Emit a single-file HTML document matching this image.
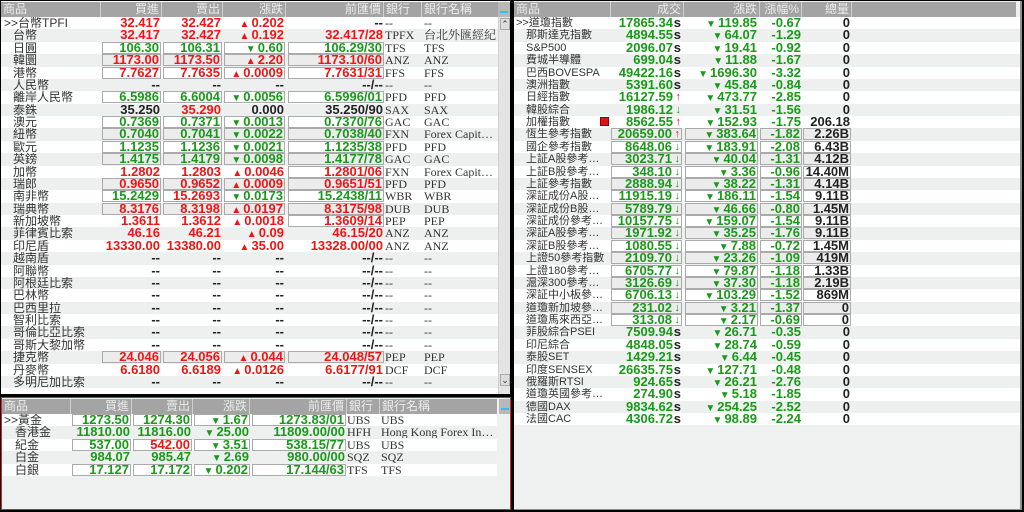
<!DOCTYPE html>
<html><head><meta charset="utf-8">
<style>
*{margin:0;padding:0;box-sizing:border-box}
body{width:1024px;height:512px;background:#000;position:relative;overflow:hidden;font-family:"Liberation Sans","Noto Sans CJK TC",sans-serif}
.p{position:absolute;overflow:hidden}
#tl{left:1px;top:1px;width:509px;height:393px;background:#fff}
#bl{left:1px;top:397px;width:510px;height:113px;background:#eff1f1;border:1px solid #e02020}
#rt{left:514px;top:1px;width:508px;height:509px;background:#eff1f1;border-right:2px solid #909090;border-bottom:1px solid #909090}
.h{position:absolute;top:1px;left:0;height:15px;background:#a4a4a4;color:#ececec;font-size:12px;line-height:15px}
.h span{position:absolute;top:0;height:15px;border-right:1px solid #d0d0d0;padding:0 2px}
.h .rr{text-align:right}
.rows{position:absolute;top:16px;left:0}
.r{position:relative;height:12.375px;font-size:13px;line-height:12px}
.r:nth-child(even){background:#eef0f0}
.r>*{position:absolute;top:0;height:12px;white-space:nowrap;font-style:normal;text-decoration:none}
.r>i{font-size:11px;color:#333;font-weight:normal;overflow:hidden;text-overflow:ellipsis}
.L .r>i{font-size:12px}
.r>b{text-align:right;font-weight:bold;color:#222;padding-right:1px}
.r>q{font-family:"Liberation Serif","Noto Serif CJK SC",serif;font-size:12px;color:#333;quotes:none;overflow:hidden;text-overflow:ellipsis}
.x{border:1px solid #aaa;line-height:10px!important;background:#fff}
.r:nth-child(even) .x{background:#ececec}
.R{color:#f01414!important}.G{color:#179a17!important}
em{font-style:normal;font-size:10px;vertical-align:0;margin-right:2px}
.L .n{left:12px;width:88px}.L .n0{left:3px;width:97px}
.L .a{left:101px;width:59px}.L .b{left:162px;width:59px}.L .c{left:223px;width:61px}.L .d{left:287px;width:96px}
.L .e{left:384px}.L .f{left:423px;width:73px}
.Q .n{left:12px;width:84px}.Q .n0{left:2px;width:94px}
.Q .a{left:97px;width:71px;padding-right:9px!important}.Q .c{left:171px;width:73px}.Q .d{left:246px;width:42px}.Q .v{left:289px;width:48px}
.sx{position:absolute;right:1px;top:0;font-size:13px;color:#222}
.up{position:absolute;right:1px;top:0;font-size:11px;color:#f01414}
.dn{position:absolute;right:1px;top:0;font-size:11px;color:#179a17}
.sb{position:absolute;left:497px;top:16px;width:12px;height:377px;background:#e4e4e4;border-left:1px solid #d0d0d0}
.btn{position:absolute;left:1px;width:10px;height:12px;background:#ddd;border:1px solid #aaa;font-size:9px;line-height:10px;text-align:center;color:#333}
.corner{position:absolute;left:497px;top:1px;width:12px;height:15px;background:#b8b8b8}
.corner:after{content:"";position:absolute;left:2px;top:9px;width:8px;height:2px;background:#2ac4e8}
</style></head><body>

<div class="p" id="tl">
<div class="h" style="width:497px">
<span style="left:0;width:100px">商品</span><span class="rr" style="left:100px;width:61px">買進</span><span class="rr" style="left:161px;width:61px">賣出</span><span class="rr" style="left:222px;width:63px">漲跌</span><span class="rr" style="left:285px;width:98px">前匯價</span><span style="left:383px;width:38px">銀行</span><span style="left:421px;width:76px;border:0">銀行名稱</span>
</div>
<div class="corner"></div>
<div class="rows L" style="width:497px">
<div class="r"><i class="n0">&gt;&gt;台幣TPFI</i><b class="a R">32.417</b><b class="b R">32.427</b><b class="c R"><em>▲</em>0.202</b><b class="d">--</b><q class="e">--</q><q class="f">--</q></div>
<div class="r"><i class="n">台幣</i><b class="a R">32.417</b><b class="b R">32.427</b><b class="c R"><em>▲</em>0.192</b><b class="d R">32.417/28</b><q class="e">TPFX</q><q class="f">台北外匯經紀</q></div>
<div class="r"><i class="n">日圓</i><b class="a G x">106.30</b><b class="b G x">106.31</b><b class="c G x"><em>▼</em>0.60</b><b class="d G x">106.29/30</b><q class="e">TFS</q><q class="f">TFS</q></div>
<div class="r"><i class="n">韓圜</i><b class="a R x">1173.00</b><b class="b R x">1173.50</b><b class="c R x"><em>▲</em>2.20</b><b class="d R x">1173.10/60</b><q class="e">ANZ</q><q class="f">ANZ</q></div>
<div class="r"><i class="n">港幣</i><b class="a R x">7.7627</b><b class="b R x">7.7635</b><b class="c R x"><em>▲</em>0.0009</b><b class="d R x">7.7631/31</b><q class="e">FFS</q><q class="f">FFS</q></div>
<div class="r"><i class="n">人民幣</i><b class="a">--</b><b class="b">--</b><b class="c">--</b><b class="d">--/--</b><q class="e">--</q><q class="f">--</q></div>
<div class="r"><i class="n">離岸人民幣</i><b class="a G x">6.5986</b><b class="b G x">6.6004</b><b class="c G x"><em>▼</em>0.0056</b><b class="d G x">6.5996/01</b><q class="e">PFD</q><q class="f">PFD</q></div>
<div class="r"><i class="n">泰銖</i><b class="a">35.250</b><b class="b R">35.290</b><b class="c">0.000</b><b class="d">35.250/90</b><q class="e">SAX</q><q class="f">SAX</q></div>
<div class="r"><i class="n">澳元</i><b class="a G x">0.7369</b><b class="b G x">0.7371</b><b class="c G x"><em>▼</em>0.0013</b><b class="d G x">0.7370/76</b><q class="e">GAC</q><q class="f">GAC</q></div>
<div class="r"><i class="n">紐幣</i><b class="a G x">0.7040</b><b class="b G x">0.7041</b><b class="c G x"><em>▼</em>0.0022</b><b class="d G x">0.7038/40</b><q class="e">FXN</q><q class="f">Forex Capital Markets</q></div>
<div class="r"><i class="n">歐元</i><b class="a G x">1.1235</b><b class="b G x">1.1236</b><b class="c G x"><em>▼</em>0.0021</b><b class="d G x">1.1235/38</b><q class="e">PFD</q><q class="f">PFD</q></div>
<div class="r"><i class="n">英鎊</i><b class="a G x">1.4175</b><b class="b G x">1.4179</b><b class="c G x"><em>▼</em>0.0098</b><b class="d G x">1.4177/78</b><q class="e">GAC</q><q class="f">GAC</q></div>
<div class="r"><i class="n">加幣</i><b class="a R">1.2802</b><b class="b R">1.2803</b><b class="c R"><em>▲</em>0.0046</b><b class="d R x">1.2801/06</b><q class="e">FXN</q><q class="f">Forex Capital Markets</q></div>
<div class="r"><i class="n">瑞郎</i><b class="a R x">0.9650</b><b class="b R x">0.9652</b><b class="c R x"><em>▲</em>0.0009</b><b class="d R x">0.9651/51</b><q class="e">PFD</q><q class="f">PFD</q></div>
<div class="r"><i class="n">南非幣</i><b class="a G x">15.2429</b><b class="b R x">15.2693</b><b class="c G x"><em>▼</em>0.0173</b><b class="d G x">15.2438/11</b><q class="e">WBR</q><q class="f">WBR</q></div>
<div class="r"><i class="n">瑞典幣</i><b class="a R x">8.3176</b><b class="b R x">8.3198</b><b class="c R x"><em>▲</em>0.0197</b><b class="d R x">8.3175/98</b><q class="e">DUB</q><q class="f">DUB</q></div>
<div class="r"><i class="n">新加坡幣</i><b class="a R">1.3611</b><b class="b R">1.3612</b><b class="c R"><em>▲</em>0.0018</b><b class="d R x">1.3609/14</b><q class="e">PEP</q><q class="f">PEP</q></div>
<div class="r"><i class="n">菲律賓比索</i><b class="a R">46.16</b><b class="b R">46.21</b><b class="c R"><em>▲</em>0.09</b><b class="d R">46.15/20</b><q class="e">ANZ</q><q class="f">ANZ</q></div>
<div class="r"><i class="n">印尼盾</i><b class="a R">13330.00</b><b class="b R">13380.00</b><b class="c R"><em>▲</em>35.00</b><b class="d R">13328.00/00</b><q class="e">ANZ</q><q class="f">ANZ</q></div>
<div class="r"><i class="n">越南盾</i><b class="a">--</b><b class="b">--</b><b class="c">--</b><b class="d">--/--</b><q class="e">--</q><q class="f">--</q></div>
<div class="r"><i class="n">阿聯幣</i><b class="a">--</b><b class="b">--</b><b class="c">--</b><b class="d">--/--</b><q class="e">--</q><q class="f">--</q></div>
<div class="r"><i class="n">阿根廷比索</i><b class="a">--</b><b class="b">--</b><b class="c">--</b><b class="d">--/--</b><q class="e">--</q><q class="f">--</q></div>
<div class="r"><i class="n">巴林幣</i><b class="a">--</b><b class="b">--</b><b class="c">--</b><b class="d">--/--</b><q class="e">--</q><q class="f">--</q></div>
<div class="r"><i class="n">巴西里拉</i><b class="a">--</b><b class="b">--</b><b class="c">--</b><b class="d">--/--</b><q class="e">--</q><q class="f">--</q></div>
<div class="r"><i class="n">智利比索</i><b class="a">--</b><b class="b">--</b><b class="c">--</b><b class="d">--/--</b><q class="e">--</q><q class="f">--</q></div>
<div class="r"><i class="n">哥倫比亞比索</i><b class="a">--</b><b class="b">--</b><b class="c">--</b><b class="d">--/--</b><q class="e">--</q><q class="f">--</q></div>
<div class="r"><i class="n">哥斯大黎加幣</i><b class="a">--</b><b class="b">--</b><b class="c">--</b><b class="d">--/--</b><q class="e">--</q><q class="f">--</q></div>
<div class="r"><i class="n">捷克幣</i><b class="a R x">24.046</b><b class="b R x">24.056</b><b class="c R x"><em>▲</em>0.044</b><b class="d R x">24.048/57</b><q class="e">PEP</q><q class="f">PEP</q></div>
<div class="r"><i class="n">丹麥幣</i><b class="a R">6.6180</b><b class="b R">6.6189</b><b class="c R"><em>▲</em>0.0126</b><b class="d R">6.6177/91</b><q class="e">DCF</q><q class="f">DCF</q></div>
<div class="r"><i class="n">多明尼加比索</i><b class="a">--</b><b class="b">--</b><b class="c">--</b><b class="d">--/--</b><q class="e">--</q><q class="f">--</q></div>
</div>
<div class="sb"><div class="btn" style="top:1px">⌃</div><div class="btn" style="top:357px">⌄</div></div>
</div>

<div class="p" id="bl">
<div class="h" style="width:495px;top:1px">
<span style="left:0;width:69px">商品</span><span class="rr" style="left:69px;width:61px">買進</span><span class="rr" style="left:130px;width:61px">賣出</span><span class="rr" style="left:191px;width:57px">漲跌</span><span class="rr" style="left:248px;width:97px">前匯價</span><span style="left:345px;width:33px">銀行</span><span style="left:378px;width:117px;border:0">銀行名稱</span>
</div>
<div class="corner" style="left:497px;top:1px"></div>
<div class="rows L" style="width:495px;top:16px">
<div class="r" style="background:#fff"><i class="n0" style="left:2px">&gt;&gt;黃金</i><b class="a G x" style="left:70px;width:59px">1273.50</b><b class="b G x" style="left:131px;width:59px">1274.30</b><b class="c G x" style="left:192px;width:56px"><em>▼</em>1.67</b><b class="d G x" style="left:250px;width:94px">1273.83/01</b><q class="e" style="left:345px">UBS</q><q class="f" style="left:379px;width:116px">UBS</q></div>
<div class="r"><i class="n" style="left:13px">香港金</i><b class="a G" style="left:70px;width:59px">11810.00</b><b class="b G" style="left:131px;width:59px">11816.00</b><b class="c G" style="left:192px;width:56px"><em>▼</em>25.00</b><b class="d G" style="left:250px;width:94px">11809.00/00</b><q class="e" style="left:345px">HFH</q><q class="f" style="left:379px;width:116px">Hong Kong Forex Investment</q></div>
<div class="r" style="background:#fff"><i class="n" style="left:13px">紀金</i><b class="a G x" style="left:70px;width:59px">537.00</b><b class="b R x" style="left:131px;width:59px">542.00</b><b class="c G x" style="left:192px;width:56px"><em>▼</em>3.51</b><b class="d G x" style="left:250px;width:94px">538.15/77</b><q class="e" style="left:345px">UBS</q><q class="f" style="left:379px;width:116px">UBS</q></div>
<div class="r"><i class="n" style="left:13px">白金</i><b class="a G" style="left:70px;width:59px">984.07</b><b class="b G" style="left:131px;width:59px">985.47</b><b class="c G" style="left:192px;width:56px"><em>▼</em>2.69</b><b class="d G" style="left:250px;width:94px">980.00/00</b><q class="e" style="left:345px">SQZ</q><q class="f" style="left:379px;width:116px">SQZ</q></div>
<div class="r" style="background:#fff"><i class="n" style="left:13px">白銀</i><b class="a G x" style="left:70px;width:59px">17.127</b><b class="b G x" style="left:131px;width:59px">17.172</b><b class="c G x" style="left:192px;width:56px"><em>▼</em>0.202</b><b class="d G x" style="left:250px;width:94px">17.144/63</b><q class="e" style="left:345px">TFS</q><q class="f" style="left:379px;width:116px">TFS</q></div>
</div>
</div>

<div class="p" id="rt">
<div class="h" style="width:502px">
<span style="left:0;width:97px">商品</span><span class="rr" style="left:97px;width:73px">成交</span><span class="rr" style="left:170px;width:76px">漲跌</span><span class="rr" style="left:246px;width:42px">漲幅%</span><span class="rr" style="left:288px;width:50px">總量</span><span style="left:338px;width:164px;border:0"></span>
</div>
<div class="rows Q" style="width:506px">
<div class="r" style="background:#fff"><i class="n0">&gt;&gt;道瓊指數</i><b class="a G">17865.34<span class="sx">s</span></b><b class="c G"><em>▼</em>119.85</b><b class="d G">-0.67</b><b class="v">0</b></div>
<div class="r"><i class="n">那斯達克指數</i><b class="a G">4894.55<span class="sx">s</span></b><b class="c G"><em>▼</em>64.07</b><b class="d G">-1.29</b><b class="v">0</b></div>
<div class="r" style="background:#fff"><i class="n">S&amp;P500</i><b class="a G">2096.07<span class="sx">s</span></b><b class="c G"><em>▼</em>19.41</b><b class="d G">-0.92</b><b class="v">0</b></div>
<div class="r"><i class="n">費城半導體</i><b class="a G">699.04<span class="sx">s</span></b><b class="c G"><em>▼</em>11.88</b><b class="d G">-1.67</b><b class="v">0</b></div>
<div class="r" style="background:#fff"><i class="n">巴西BOVESPA</i><b class="a G">49422.16<span class="sx">s</span></b><b class="c G"><em>▼</em>1696.30</b><b class="d G">-3.32</b><b class="v">0</b></div>
<div class="r"><i class="n">澳洲指數</i><b class="a G">5391.60<span class="sx">s</span></b><b class="c G"><em>▼</em>45.84</b><b class="d G">-0.84</b><b class="v">0</b></div>
<div class="r" style="background:#fff"><i class="n">日經指數</i><b class="a G">16127.59<span class="up">↑</span></b><b class="c G"><em>▼</em>473.77</b><b class="d G">-2.85</b><b class="v">0</b></div>
<div class="r"><i class="n">韓股綜合</i><b class="a G">1986.12<span class="dn">↓</span></b><b class="c G"><em>▼</em>31.51</b><b class="d G">-1.56</b><b class="v">0</b></div>
<div class="r" style="background:#fff"><i class="n">加權指數</i><span style="left:86px;top:1px;width:9px;height:9px;background:#d01818;border:1px solid #900"></span><b class="a G">8562.55<span class="up">↑</span></b><b class="c G"><em>▼</em>152.93</b><b class="d G">-1.75</b><b class="v">206.18</b></div>
<div class="r"><i class="n">恆生參考指數</i><b class="a G x">20659.00<span class="up">↑</span></b><b class="c G x"><em>▼</em>383.64</b><b class="d G x">-1.82</b><b class="v x">2.26B</b></div>
<div class="r" style="background:#fff"><i class="n">國企參考指數</i><b class="a G x">8648.06<span class="dn">↓</span></b><b class="c G x"><em>▼</em>183.91</b><b class="d G x">-2.08</b><b class="v x">6.43B</b></div>
<div class="r"><i class="n">上証A股參考指數</i><b class="a G x">3023.71<span class="dn">↓</span></b><b class="c G x"><em>▼</em>40.04</b><b class="d G x">-1.31</b><b class="v x">4.12B</b></div>
<div class="r" style="background:#fff"><i class="n">上証B股參考指數</i><b class="a G x">348.10<span class="dn">↓</span></b><b class="c G x"><em>▼</em>3.36</b><b class="d G x">-0.96</b><b class="v x">14.40M</b></div>
<div class="r"><i class="n">上証參考指數</i><b class="a G x">2888.94<span class="dn">↓</span></b><b class="c G x"><em>▼</em>38.22</b><b class="d G x">-1.31</b><b class="v x">4.14B</b></div>
<div class="r" style="background:#fff"><i class="n">深証成份A股參考指數</i><b class="a G x">11915.19<span class="dn">↓</span></b><b class="c G x"><em>▼</em>186.11</b><b class="d G x">-1.54</b><b class="v x">9.11B</b></div>
<div class="r"><i class="n">深証成份B股參考指數</i><b class="a G x">5789.79<span class="dn">↓</span></b><b class="c G x"><em>▼</em>46.66</b><b class="d G x">-0.80</b><b class="v x">1.45M</b></div>
<div class="r" style="background:#fff"><i class="n">深証成份參考指數</i><b class="a G x">10157.75<span class="dn">↓</span></b><b class="c G x"><em>▼</em>159.07</b><b class="d G x">-1.54</b><b class="v x">9.11B</b></div>
<div class="r"><i class="n">深証A股參考指數</i><b class="a G x">1971.92<span class="dn">↓</span></b><b class="c G x"><em>▼</em>35.25</b><b class="d G x">-1.76</b><b class="v x">9.11B</b></div>
<div class="r" style="background:#fff"><i class="n">深証B股參考指數</i><b class="a G x">1080.55<span class="dn">↓</span></b><b class="c G x"><em>▼</em>7.88</b><b class="d G x">-0.72</b><b class="v x">1.45M</b></div>
<div class="r"><i class="n">上證50參考指數</i><b class="a G x">2109.70<span class="dn">↓</span></b><b class="c G x"><em>▼</em>23.26</b><b class="d G x">-1.09</b><b class="v x">419M</b></div>
<div class="r" style="background:#fff"><i class="n">上證180參考指數</i><b class="a G x">6705.77<span class="dn">↓</span></b><b class="c G x"><em>▼</em>79.87</b><b class="d G x">-1.18</b><b class="v x">1.33B</b></div>
<div class="r"><i class="n">滬深300參考指數</i><b class="a G x">3126.69<span class="dn">↓</span></b><b class="c G x"><em>▼</em>37.30</b><b class="d G x">-1.18</b><b class="v x">2.19B</b></div>
<div class="r" style="background:#fff"><i class="n">深証中小板參考指數</i><b class="a G x">6706.13<span class="dn">↓</span></b><b class="c G x"><em>▼</em>103.29</b><b class="d G x">-1.52</b><b class="v x">869M</b></div>
<div class="r"><i class="n">道瓊新加坡參考指數</i><b class="a G x">231.02<span class="dn">↓</span></b><b class="c G x"><em>▼</em>3.21</b><b class="d G x">-1.37</b><b class="v x">0</b></div>
<div class="r" style="background:#fff"><i class="n">道瓊馬來西亞參考指數</i><b class="a G x">313.08<span class="dn">↓</span></b><b class="c G x"><em>▼</em>2.17</b><b class="d G x">-0.69</b><b class="v x">0</b></div>
<div class="r"><i class="n">菲股綜合PSEI</i><b class="a G">7509.94<span class="sx">s</span></b><b class="c G"><em>▼</em>26.71</b><b class="d G">-0.35</b><b class="v">0</b></div>
<div class="r" style="background:#fff"><i class="n">印尼綜合</i><b class="a G">4848.05<span class="sx">s</span></b><b class="c G"><em>▼</em>28.74</b><b class="d G">-0.59</b><b class="v">0</b></div>
<div class="r"><i class="n">泰股SET</i><b class="a G">1429.21<span class="sx">s</span></b><b class="c G"><em>▼</em>6.44</b><b class="d G">-0.45</b><b class="v">0</b></div>
<div class="r" style="background:#fff"><i class="n">印度SENSEX</i><b class="a G">26635.75<span class="sx">s</span></b><b class="c G"><em>▼</em>127.71</b><b class="d G">-0.48</b><b class="v">0</b></div>
<div class="r"><i class="n">俄羅斯RTSI</i><b class="a G">924.65<span class="sx">s</span></b><b class="c G"><em>▼</em>26.21</b><b class="d G">-2.76</b><b class="v">0</b></div>
<div class="r" style="background:#fff"><i class="n">道瓊英國參考指數</i><b class="a G">274.90<span class="sx">s</span></b><b class="c G"><em>▼</em>5.18</b><b class="d G">-1.85</b><b class="v">0</b></div>
<div class="r"><i class="n">德國DAX</i><b class="a G">9834.62<span class="sx">s</span></b><b class="c G"><em>▼</em>254.25</b><b class="d G">-2.52</b><b class="v">0</b></div>
<div class="r" style="background:#fff"><i class="n">法國CAC</i><b class="a G">4306.72<span class="sx">s</span></b><b class="c G"><em>▼</em>98.89</b><b class="d G">-2.24</b><b class="v">0</b></div>
</div>
</div>
</body></html>
